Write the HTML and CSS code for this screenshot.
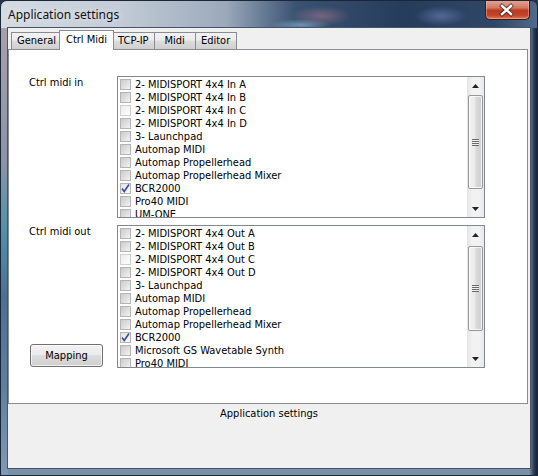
FILE: index.html
```html
<!DOCTYPE html>
<html>
<head>
<meta charset="utf-8">
<title>Application settings</title>
<link rel="stylesheet" href="styles.css">
</head>
<body>
<div class="window">
  <div class="titlebar">
    <span class="title">Application settings</span>
    <div class="close">
      <svg width="45" height="20" viewBox="0 0 45 20">
        <path d="M18 6 L27 14 M27 6 L18 14" stroke="#3a2020" stroke-width="4.2" stroke-linecap="square" fill="none" opacity="0.75"/>
        <path d="M18 6 L27 14 M27 6 L18 14" stroke="#ffffff" stroke-width="2.4" stroke-linecap="square" fill="none"/>
      </svg>
    </div>
  </div>
  <div class="client">
    <div class="tabs">
      <div class="tab">General</div>
      <div class="tab active">Ctrl Midi</div>
      <div class="tab">TCP-IP</div>
      <div class="tab">Midi</div>
      <div class="tab">Editor</div>
    </div>
    <div class="panel">
      <div class="form">
        <div class="label">Ctrl midi in</div>
        <div class="listbox">
          <div class="items">
            <div class="item"><span class="cb"></span><span>2- MIDISPORT 4x4 In A</span></div>
            <div class="item"><span class="cb"></span><span>2- MIDISPORT 4x4 In B</span></div>
            <div class="item"><span class="cb light"></span><span>2- MIDISPORT 4x4 In C</span></div>
            <div class="item"><span class="cb"></span><span>2- MIDISPORT 4x4 In D</span></div>
            <div class="item"><span class="cb"></span><span>3- Launchpad</span></div>
            <div class="item"><span class="cb"></span><span>Automap MIDI</span></div>
            <div class="item"><span class="cb"></span><span>Automap Propellerhead</span></div>
            <div class="item"><span class="cb"></span><span>Automap Propellerhead Mixer</span></div>
            <div class="item"><span class="cb checked"><svg width="11" height="11" viewBox="0 0 11 11"><path d="M2 5.5 L4.2 8.5 L9 1.5" stroke="#3d4f8f" stroke-width="1.6" fill="none"/></svg></span><span>BCR2000</span></div>
            <div class="item"><span class="cb"></span><span>Pro40 MIDI</span></div>
            <div class="item"><span class="cb"></span><span>UM-ONE</span></div>
          </div>
          <div class="scrollbar">
            <div class="sb-btn"><svg width="7" height="4" viewBox="0 0 7 4"><path d="M0 4 L3.5 0 L7 4 Z" fill="#222"/></svg></div>
            <div class="sb-track">
              <div class="thumb" style="margin-top:1px;height:94px"><span class="grip"></span></div>
            </div>
            <div class="sb-btn"><svg width="7" height="4" viewBox="0 0 7 4"><path d="M0 0 L7 0 L3.5 4 Z" fill="#222"/></svg></div>
          </div>
        </div>

        <div class="leftcol">
          <div class="label">Ctrl midi out</div>
          <button class="btn">Mapping</button>
        </div>
        <div class="listbox">
          <div class="items">
            <div class="item"><span class="cb"></span><span>2- MIDISPORT 4x4 Out A</span></div>
            <div class="item"><span class="cb"></span><span>2- MIDISPORT 4x4 Out B</span></div>
            <div class="item"><span class="cb light"></span><span>2- MIDISPORT 4x4 Out C</span></div>
            <div class="item"><span class="cb"></span><span>2- MIDISPORT 4x4 Out D</span></div>
            <div class="item"><span class="cb"></span><span>3- Launchpad</span></div>
            <div class="item"><span class="cb"></span><span>Automap MIDI</span></div>
            <div class="item"><span class="cb"></span><span>Automap Propellerhead</span></div>
            <div class="item"><span class="cb"></span><span>Automap Propellerhead Mixer</span></div>
            <div class="item"><span class="cb checked"><svg width="11" height="11" viewBox="0 0 11 11"><path d="M2 5.5 L4.2 8.5 L9 1.5" stroke="#3d4f8f" stroke-width="1.6" fill="none"/></svg></span><span>BCR2000</span></div>
            <div class="item"><span class="cb"></span><span>Microsoft GS Wavetable Synth</span></div>
            <div class="item"><span class="cb"></span><span>Pro40 MIDI</span></div>
          </div>
          <div class="scrollbar">
            <div class="sb-btn"><svg width="7" height="4" viewBox="0 0 7 4"><path d="M0 4 L3.5 0 L7 4 Z" fill="#222"/></svg></div>
            <div class="sb-track">
              <div class="thumb" style="margin-top:3px;height:85px"><span class="grip"></span></div>
            </div>
            <div class="sb-btn"><svg width="7" height="4" viewBox="0 0 7 4"><path d="M0 0 L7 0 L3.5 4 Z" fill="#222"/></svg></div>
          </div>
        </div>
      </div>
    </div>
    <div class="status">Application settings</div>
  </div>
</div>
</body>
</html>
```
FILE: styles.css
```css
* { box-sizing: border-box; }
html, body { margin: 0; padding: 0; }
body {
  width: 538px;
  height: 476px;
  overflow: hidden;
  background: #26364a;
  font-family: "DejaVu Sans Condensed", "Liberation Sans", Tahoma, sans-serif;
  font-size: 11px;
  color: #000;
}
.window {
  width: 538px;
  height: 476px;
  display: flex;
  flex-direction: column;
  border: 1px solid #1b2636;
  border-radius: 7px 7px 0 0;
  padding: 0 7px 7px 7px;
  background:
    radial-gradient(ellipse 30px 10px at 320px 15px, rgba(170,120,140,0.55), transparent),
    radial-gradient(ellipse 26px 10px at 440px 15px, rgba(110,130,190,0.6), transparent),
    radial-gradient(ellipse 26px 10px at 560px 15px, rgba(110,130,190,0.4), transparent),
    radial-gradient(ellipse 30px 6px at 300px 24px, rgba(150,190,220,0.6), transparent),
    linear-gradient(to right, #d4dbe3 0%, #c3ccd7 22%, #9aa9bb 42%, #3a5272 55%, #263c5c 75%, #2f4766 92%, #51698a 100%);
  background-size: 100% 28px, 100% 28px, 100% 28px, 100% 28px, 100% 28px;
  background-repeat: no-repeat;
  background-color: #7890a8;
  position: relative;
  overflow: hidden;
}
.window::before {
  content: "";
  position: absolute;
  left: 0; top: 27px; bottom: 0; width: 7px;
  background: linear-gradient(to bottom, #a8a0ac 0%, #8a94a6 30%, #4f93ab 45%, #4d6f96 60%, #5e7ea0 80%, #7f9ab6 100%);
}
.window::after {
  content: "";
  position: absolute;
  right: 0; top: 27px; bottom: 0; width: 7px;
  background: linear-gradient(to right, #6a7c92, #2a3950 60%, #1a2333);
}
.titlebar {
  height: 27px;
  display: flex;
  align-items: flex-start;
  justify-content: space-between;
}
.title {
  font-family: "Noto Sans", "Open Sans", sans-serif;
  font-size: 12px;
  color: #101010;
  line-height: 16px;
  margin-top: 6px;
  text-shadow: 0 0 6px rgba(255,255,255,0.8);
}
.close {
  width: 45px;
  height: 20px;
  margin-top: -1px;
  border: 1px solid #3b1a14;
  border-top: none;
  border-radius: 0 0 5px 5px;
  background: linear-gradient(to bottom, #e6a897 0%, #d47a65 40%, #b83b22 55%, #c4442a 80%, #e0775a 100%);
  box-shadow: inset 0 0 0 1px rgba(255,200,180,0.45);
  display: flex;
  align-items: center;
  justify-content: center;
}
.close svg { display: block; margin-left: -2px; }
.client {
  flex: 1;
  display: flex;
  flex-direction: column;
  background: #f0f0f0;
  box-shadow: 0 0 0 1px #44556b;
  position: relative;
  z-index: 1;
}
.tabs {
  height: 21px;
  padding: 1px 0 0 3px;
  display: flex;
  align-items: flex-end;
}
.tab {
  height: 17px;
  line-height: 16px;
  padding: 0 5px;
  min-width: 42px;
  text-align: center;
  border: 1px solid #898c95;
  border-bottom: none;
  margin-right: -1px;
  background: linear-gradient(to bottom, #f2f2f2 0%, #ebebeb 45%, #dddddd 50%, #cfcfcf 100%);
  white-space: nowrap;
  position: relative;
  z-index: 1;
}
.tab.active {
  height: 20px;
  line-height: 17px;
  padding: 0 6px;
  margin: 0 -2px -1px -2px;
  background: #ffffff;
  z-index: 3;
}
.panel {
  flex: 1;
  margin-right: 2px;
  background: #ffffff;
  border: 1px solid #898c95;
  position: relative;
  z-index: 2;
}
.form {
  padding: 26px 41px 0 20px;
  display: grid;
  grid-template-columns: 88px 368px;
  grid-template-rows: 142px 143px;
  row-gap: 7px;
}
.label {
  line-height: 13px;
  margin-top: 0;
}
.leftcol {
  display: flex;
  flex-direction: column;
  justify-content: space-between;
  align-items: flex-start;
}
.btn {
  font-family: inherit;
  font-size: 11px;
  color: #000;
  width: 73px;
  height: 23px;
  margin: 0 0 1px 1px;
  padding: 0;
  border: 1px solid #707070;
  border-radius: 3px;
  background: linear-gradient(to bottom, #f2f2f2 0%, #ebebeb 45%, #dddddd 50%, #cfcfcf 100%);
  box-shadow: inset 0 0 0 1px rgba(255,255,255,0.7);
}
.listbox {
  border: 1px solid #828790;
  display: flex;
  overflow: hidden;
  background: #fff;
}
.items {
  flex: 1;
  overflow: hidden;
  padding: 1px 0 0 2px;
}
.item {
  height: 13px;
  display: flex;
  align-items: center;
  gap: 4px;
  white-space: nowrap;
  line-height: 13px;
}
.cb {
  width: 11px;
  height: 11px;
  flex: none;
  border: 1px solid #b4b4b4;
  background: linear-gradient(135deg, #cbcbcb 0%, #dedede 50%, #f3f3f3 100%);
  display: flex;
  align-items: center;
  justify-content: center;
}
.cb.light {
  border-color: #cfcfcf;
  background: linear-gradient(135deg, #ececec 0%, #f7f7f7 60%, #ffffff 100%);
}
.cb.checked { background: linear-gradient(135deg, #e2e2e2 0%, #f0f0f0 60%, #fafafa 100%); }
.cb svg { display: block; flex: none; margin: -1px; }
.scrollbar {
  width: 17px;
  flex: none;
  display: flex;
  flex-direction: column;
  background: linear-gradient(to right, #e4e4e4, #f2f2f2 30%, #f2f2f2 70%, #e8e8e8);
}
.sb-btn {
  height: 17px;
  flex: none;
  display: flex;
  align-items: center;
  justify-content: center;
}
.sb-track {
  flex: 1;
  padding: 0 1px;
}
.thumb {
  border: 1px solid #979797;
  border-radius: 2px;
  background: linear-gradient(to right, #f3f3f3 0%, #e9e9e9 45%, #d9d9d9 55%, #cdcdcd 100%);
  box-shadow: inset 0 0 0 1px rgba(255,255,255,0.75);
  display: flex;
  align-items: center;
  justify-content: center;
}
.grip {
  width: 7px;
  height: 7px;
  background: repeating-linear-gradient(to bottom, #6a6a6a 0 1px, #eeeeee 1px 2px);
}
.status {
  height: 64px;
  text-align: center;
  padding-top: 3px;
  line-height: 13px;
  color: #000;
}
```
